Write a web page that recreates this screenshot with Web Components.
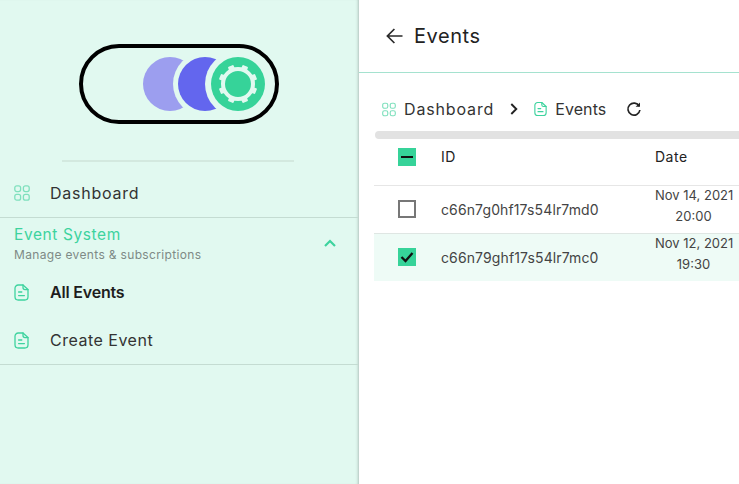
<!DOCTYPE html>
<html lang="en"><head><meta charset="utf-8"><title>Events</title>
<style>
html,body{margin:0;height:100%;overflow:hidden;background:#fff}
body{font-family:Inter,"Liberation Sans",sans-serif;color:#2a2a2a}
</style></head><body>
<app-shell>
  <side-nav slot="side">
    <nav-item icon="grid" spacing="wide">Dashboard</nav-item>
    <nav-group title="Event System" subtitle="Manage events &amp; subscriptions">
      <nav-item icon="doc" active>All Events</nav-item>
      <nav-item icon="doc">Create Event</nav-item>
    </nav-group>
  </side-nav>
  <page-header>Events</page-header>
  <bread-crumbs></bread-crumbs>
  <event-table></event-table>
</app-shell>
<script>
const ICONS={
 grid:`<svg width="16" height="16" viewBox="0 0 16 16" fill="none" stroke="#7fe0bd" stroke-width="1.3"><rect x=".8" y=".8" width="5.8" height="5.8" rx="2"/><rect x="9.4" y=".8" width="5.8" height="5.8" rx="2"/><rect x=".8" y="9.4" width="5.8" height="5.8" rx="2"/><rect x="9.4" y="9.4" width="5.8" height="5.8" rx="2"/></svg>`,
 doc:`<svg width="15" height="17" viewBox="0 0 15 17" fill="none" stroke="#3dd39e" stroke-width="1.3" stroke-linecap="round" stroke-linejoin="round"><path d="M9 1H4.2C2.4 1 1 2.4 1 4.2v8.6C1 14.6 2.4 16 4.2 16h6.6c1.8 0 3.2-1.4 3.2-3.2V5.6L9 1z"/><path d="M9 1v2.6c0 1.1.9 2 2 2h3"/><path d="M4.6 8h3.2M4.6 11.6h5.8"/></svg>`
};
function def(name,css,html){
  customElements.define(name,class extends HTMLElement{
    constructor(){super();this.attachShadow({mode:'open'}).innerHTML=`<style>${css}</style>`+(typeof html==='function'?html(this):html);}
  });
}
def('app-shell',`:host{display:grid;grid-template-columns:359px 1fr;height:484px;width:739px;overflow:hidden}
 main{min-width:0;display:flex;flex-direction:column;overflow:hidden}`,
 `<slot name="side"></slot><main><slot></slot></main>`);
def('brand-logo',`:host{display:flex;justify-content:center;height:160px;padding:43px 1px 0 0;box-sizing:border-box}`,
 `<svg width="202" height="82" viewBox="77 43 202 82" fill="none" role="img" aria-label="logo">
  <rect x="80" y="46" width="196" height="76" rx="38" stroke="#000" stroke-width="4"/>
  <circle cx="169" cy="84" r="27" fill="#9c9eef"/>
  <circle cx="204" cy="84" r="32" fill="#e1f9f0"/>
  <circle cx="204" cy="84" r="27" fill="#6366ee"/>
  <circle cx="237" cy="84" r="33" fill="#e1f9f0"/>
  <circle cx="237" cy="84" r="27" fill="#36d399"/>
  <circle cx="237" cy="84" r="15" stroke="#e1f9f0" stroke-width="4"/>
  <g fill="#e1f9f0">${[22.5,67.5,112.5,157.5,202.5,247.5,292.5,337.5].map(a=>`<rect x="234" y="64.5" width="6" height="5" rx="1" transform="rotate(${a} 237 84)"/>`).join('')}</g>
 </svg>`);
def('side-nav',`:host{display:flex;flex-direction:column;background:#e1f9f0;box-shadow:inset -3px 0 3px -2px rgba(0,0,0,.22);height:484px}
 hr{border:0;height:2px;background:#d3e9df;margin:0 65px 7px 62px}
 .rule{height:1px;background:#c4dcd2;margin-right:1px}`,
 `<brand-logo></brand-logo><hr><slot></slot><div class="rule"></div>`);
def('nav-item',`:host{display:flex;align-items:center;height:48px;padding-left:14px;font-size:16px;letter-spacing:.5px;color:#333}
 :host([spacing=wide]){letter-spacing:.75px}
 :host([active]){font-weight:600;color:#1d1d1d;letter-spacing:-.2px}
 .i{width:36px;display:flex;flex:none}`,
 t=>`<span class="i">${ICONS[t.getAttribute('icon')]}</span><slot></slot>`);
def('nav-group',`:host{display:block;border-top:1px solid #c4dcd2;margin-right:1px}
 .h{display:flex;align-items:flex-start;justify-content:space-between;padding:7px 21px 0 14px;height:50px;box-sizing:border-box}
 .t{font-size:15.5px;line-height:19px;color:#3dd39e;letter-spacing:.6px}
 .s{font-size:12px;line-height:18px;color:#7e8a86;letter-spacing:.34px;margin-top:2px}
 svg{display:block;margin-top:14px}`,
 t=>`<div class="h"><div><div class="t">${t.getAttribute('title')}</div><div class="s">${t.getAttribute('subtitle').replace('&','&amp;')}</div></div>
 <svg width="14" height="9" viewBox="0 0 14 9" fill="none" stroke="#3dd39e" stroke-width="2.2"><path d="M2 7l5-5 5 5"/></svg></div><slot></slot>`);
def('page-header',`:host{display:flex;align-items:center;gap:11px;height:72px;padding-left:27px;border-bottom:1px solid #a5e2cf;font-size:20px;letter-spacing:.55px;color:#222;flex:none}`,
 `<svg width="17" height="16" viewBox="0 0 17 16" fill="none" stroke="#2a2a2a" stroke-width="1.7"><path d="M16.5 8H1.5M8.4 1L1.4 8l7 7"/></svg><slot></slot>`);
def('bread-crumbs',`:host{display:flex;align-items:center;height:36px;margin-top:18px;padding-left:23px;font-size:16px;letter-spacing:.85px;color:#333;flex:none}
 .a{display:flex;margin-right:8px}.g{display:flex;margin:0 16px}.d{display:flex;margin-right:8px}.e{letter-spacing:.1px}.r{display:flex;margin-left:20px}`,
 `<span class="a">${ICONS.grid.replace('width="16" height="16"','width="14" height="15"')}</span><span>Dashboard</span>
 <span class="g"><svg width="8" height="12" viewBox="0 0 8 12" fill="none" stroke="#222" stroke-width="1.9"><path d="M1.3 1l5 5-5 5"/></svg></span>
 <span class="d">${ICONS.doc.replace('width="15" height="17"','width="13" height="16"')}</span><span class="e">Events</span>
 <span class="r"><svg width="16" height="16" viewBox="0 0 16 16" fill="none" stroke="#222" stroke-width="1.7"><path d="M13.2 5.2A6 6 0 1 0 13.9 9"/><path d="M14 1.4v4.4H9.6z" fill="#222" stroke="none"/></svg></span>`);
def('check-box',`:host{display:flex;width:18px;height:18px;box-sizing:border-box;align-items:center;justify-content:center}
 :host([state=off]){border:2.4px solid #777;background:#fff}
 :host([state=on]),:host([state=mixed]){background:#36d399}`,
 t=>({on:`<svg width="14" height="12" viewBox="0 0 14 12" fill="none" stroke="#111" stroke-width="2.3"><path d="M1.5 6l4 4 7-8"/></svg>`,
      mixed:`<svg width="12" height="2" viewBox="0 0 12 2"><rect width="12" height="2" fill="#111"/></svg>`,off:''})[t.getAttribute('state')]);
def('event-table',`:host{display:block;margin:4px 0 0 15px;flex:none;width:420px}
 .bar{height:8px;background:#e2e2e2;border-radius:4px 0 0 4px;margin-left:1px}
 .row{display:grid;grid-template-columns:67px 214px 77px;grid-template-rows:minmax(0,1fr);align-items:center;height:48px;box-sizing:border-box;border-bottom:1px solid #dfe6e3;font-size:14px;letter-spacing:.12px;color:#444}
 .row.head{height:47px;padding-bottom:10px;color:#222;border-bottom-color:#e6e6e6;letter-spacing:.5px}
 .row.head div:not(.c){margin-bottom:2px}
 .row.sel{background:#eefbf6;border-bottom:0;height:47px}
 .c{padding-left:24px;display:flex}
 .row:not(.head) .c{margin-bottom:2px}
 .date{text-align:center;white-space:nowrap;font-size:13px;line-height:21px;letter-spacing:0;margin-bottom:8px}
 .head .date{text-align:left;font-size:14px;letter-spacing:.5px}`,
 `<div class="bar"></div>
 <div class="row head"><div class="c"><check-box state="mixed"></check-box></div><div>ID</div><div class="date">Date</div></div>
 <div class="row"><div class="c"><check-box state="off"></check-box></div><div>c66n7g0hf17s54lr7md0</div><div class="date">Nov 14, 2021<br>20:00</div></div>
 <div class="row sel"><div class="c"><check-box state="on"></check-box></div><div>c66n79ghf17s54lr7mc0</div><div class="date">Nov 12, 2021<br>19:30</div></div>`);
</script>
</body></html>
